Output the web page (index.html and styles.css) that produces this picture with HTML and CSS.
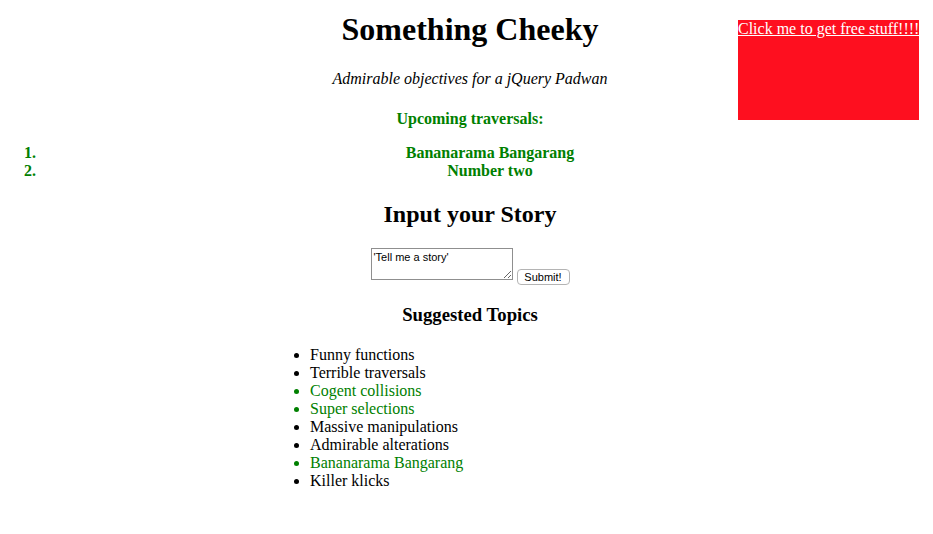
FILE: index.html
```html
<!DOCTYPE html>
<html>
<head>
<meta charset="utf-8">
<title>Something Cheeky</title>
<link rel="stylesheet" href="styles.css">
</head>
<body>
<a class="promo" href="#">Click me to get free stuff!!!!</a>
<h1 class="title">Something Cheeky</h1>
<p class="tagline">Admirable objectives for a jQuery Padwan</p>
<h4 class="upcoming-title">Upcoming traversals:</h4>
<ol class="upcoming">
  <li>Bananarama Bangarang</li>
  <li>Number two</li>
</ol>
<h2 class="story-title">Input your Story</h2>
<form class="story-form">
  <textarea class="story-input">'Tell me a story'</textarea>
  <button class="submit" type="button">Submit!</button>
</form>
<h3 class="topics-title">Suggested Topics</h3>
<ul class="topics">
  <li>Funny functions</li>
  <li>Terrible traversals</li>
  <li class="hot">Cogent collisions</li>
  <li class="hot">Super selections</li>
  <li>Massive manipulations</li>
  <li>Admirable alterations</li>
  <li class="hot">Bananarama Bangarang</li>
  <li>Killer klicks</li>
</ul>
</body>
</html>
```
FILE: styles.css
```css
html {
  background: #fff;
  overflow-x: hidden;
}
body {
  margin: 0;
  width: 940px;
  padding-top: 11px;
  font-family: "Liberation Serif", "Times New Roman", serif;
  font-size: 16px;
  color: #000;
  text-align: center;
}
.promo {
  position: absolute;
  top: 20px;
  left: 738px;
  width: 181px;
  height: 100px;
  background: #fe0f1f;
  color: #fff;
  text-align: left;
  line-height: 18px;
  white-space: nowrap;
}
.title {
  font-size: 32px;
  margin: 0 0 22px;
}
.tagline {
  font-style: italic;
  margin: 0;
}
.upcoming-title {
  color: #008000;
  font-size: 16px;
  margin: 22px 0 16px;
}
.upcoming {
  color: #008000;
  font-weight: bold;
  margin: 16px 0;
  padding-left: 40px;
}
.story-title {
  font-size: 24px;
  margin: 21px 0 20px;
}
.story-form {
  margin: 0 0 24px;
}
.story-input {
  width: 136px;
  height: 26px;
  padding: 2px;
  border: 1px solid #8f8f8f;
  font-family: "Liberation Sans", Arial, sans-serif;
  font-size: 11px;
  resize: both;
  vertical-align: bottom;
  margin: 0;
}
.submit {
  font-family: "Liberation Sans", Arial, sans-serif;
  font-size: 11px;
  color: #000;
  padding: 0 6px;
  background: #fff;
  border: 1px solid #b4b4b4;
  border-radius: 4px;
  margin: 0 0 -5px 0;
  width: 53px;
  height: 16px;
  line-height: 14px;
  vertical-align: bottom;
}
.topics-title {
  font-size: 18.72px;
  margin: 18px 0 20px;
}
.topics {
  width: 360px;
  margin: 16px auto;
  padding-left: 40px;
  text-align: left;
}
.topics .hot {
  color: #008000;
}
```
